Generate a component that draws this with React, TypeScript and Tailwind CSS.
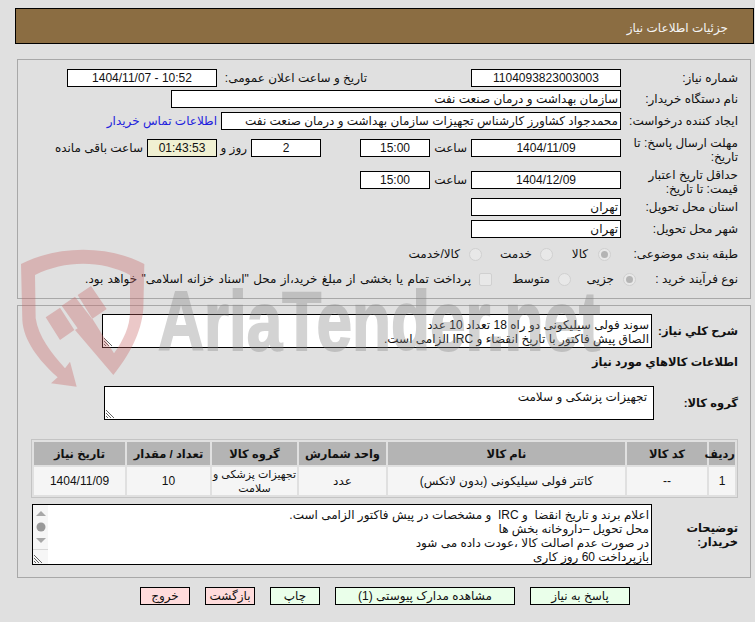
const Box = ({ className = "", bg = "bg-white", children }: { className?: string; bg?: string; children?: React.ReactNode }) => (
  <div className={`h-[18px] border border-black text-center leading-[16px] whitespace-nowrap overflow-hidden ${bg} ${className}`}>
    {children}
  </div>
);

const Grip = () => (
  <svg className="absolute left-[1px] bottom-[1px]" width="9" height="9" viewBox="0 0 9 9">
    <path d="M0 1 L8 9 M0 4 L5 9 M0 7 L2 9" stroke="#666" strokeWidth="1" fill="none" />
  </svg>
);

const Radio = ({ checked = false }: { checked?: boolean }) => (
  <span className="flex h-[13px] w-[13px] shrink-0 items-center justify-center rounded-full border border-[#d0d0d0] bg-[#e8e8e8]">
    {checked && <span className="h-[7px] w-[7px] rounded-full bg-[#b4b4b4]" />}
  </span>
);

const columns = [
  { title: "رديف", w: "w-[26px]" },
  { title: "كد كالا", w: "w-[80px]" },
  { title: "نام كالا", w: "w-[237px]" },
  { title: "واحد شمارش", w: "w-[87px]" },
  { title: "گروه كالا", w: "w-[85px]" },
  { title: "تعداد / مقدار", w: "w-[83px]" },
  { title: "تاريخ نياز", w: "w-[91px]" },
];

const cells = [
  "1",
  "--",
  "کاتتر فولی سیلیکونی (بدون لاتکس)",
  "عدد",
  <span className="text-[11px] whitespace-nowrap">
    تجهیزات پزشکی و
    <br />
    سلامت
  </span>,
  "10",
  "1404/11/09",
];

const buttons = [
  { label: "پاسخ به نیاز", className: "w-[100px] bg-[#eaffea]" },
  { label: "مشاهده مدارک پیوستی (1)", className: "w-[180px] bg-[#eaffea]" },
  { label: "چاپ", className: "w-[50px] bg-[#eaffea]" },
  { label: "بازگشت", className: "w-[50px] bg-[#ffdcdc]" },
  { label: "خروج", className: "w-[50px] bg-[#ffdcdc]" },
];

export default function App() {
  return (
    <div
      dir="rtl"
      className="relative h-[622px] overflow-hidden bg-[#e0e0e0] text-[12px] leading-[14px] text-[#111] font-['Liberation_Sans','DejaVu_Sans',sans-serif]"
    >
      <div className="mr-[1px] mt-[8px] h-[36px] w-[739px] border border-black bg-[#8b6d42] pr-[25px] leading-[38px] text-[#f4f4f4] [float:right]">
        جزئیات اطلاعات نیاز
      </div>
      <div className="clear-both h-[15px]" />

      <div className="mr-[4px] h-[240px] w-[734px] border border-[#a8a8a8] pr-[12px] pt-[9px]">
        <div className="flex items-center">
          <div className="w-[117px]">شماره نیاز:</div>
          <Box className="w-[150px]">1104093823003003</Box>
          <div className="mr-[104px] w-[145px] whitespace-nowrap">تاریخ و ساعت اعلان عمومی:</div>
          <Box className="mr-[5px] w-[150px]">
            <span dir="ltr">1404/11/07 - 10:52</span>
          </Box>
        </div>
        <div className="mt-[3px] flex items-center">
          <div className="w-[117px]">نام دستگاه خریدار:</div>
          <Box className="w-[450px] pr-[2px] text-right">سازمان بهداشت و درمان صنعت نفت</Box>
        </div>
        <div className="mt-[4px] flex items-center">
          <div className="w-[117px]">ایجاد کننده درخواست:</div>
          <Box className="w-[400px] pr-[2px] text-right">محمدجواد کشاورز کارشناس تجهیزات سازمان بهداشت و درمان صنعت نفت</Box>
          <div className="mr-[4px] whitespace-nowrap text-[#2222dd]">اطلاعات تماس خریدار</div>
        </div>
        <div className="mt-[9px] flex h-[26px] items-start">
          <div className="-mt-[3px] w-[117px] pl-[4px]">مهلت ارسال پاسخ: تا تاریخ:</div>
          <Box className="w-[150px]">1404/11/09</Box>
          <div className="w-[41px] pr-[4px] leading-[18px]">ساعت</div>
          <Box className="w-[70px]">15:00</Box>
          <Box className="mr-[39px] w-[70px]">2</Box>
          <div className="w-[34px] pr-[4px] leading-[18px] whitespace-nowrap">روز و</div>
          <Box className="w-[70px]" bg="bg-[#f0f0d2]">01:43:53</Box>
          <div className="mr-[4px] leading-[18px] whitespace-nowrap">ساعت باقی مانده</div>
        </div>
        <div className="mt-[6px] flex h-[27px] items-start">
          <div className="-mt-[3px] w-[117px] pl-[4px]">حداقل تاریخ اعتبار قیمت: تا تاریخ:</div>
          <Box className="w-[150px]">1404/12/09</Box>
          <div className="w-[41px] pr-[4px] leading-[18px]">ساعت</div>
          <Box className="w-[70px]">15:00</Box>
        </div>
        <div className="flex items-center">
          <div className="w-[117px]">استان محل تحویل:</div>
          <Box className="w-[150px] pr-[2px] text-right">تهران</Box>
        </div>
        <div className="mt-[4px] flex items-center">
          <div className="w-[117px]">شهر محل تحویل:</div>
          <Box className="w-[150px] pr-[2px] text-right">تهران</Box>
        </div>
        <div className="mt-[9px] flex h-[14px] items-center">
          <div className="w-[127px] whitespace-nowrap">طبقه بندی موضوعی:</div>
          <Radio checked />
          <span className="mr-[10px] w-[35px]">کالا</span>
          <Radio />
          <span className="mr-[8px] w-[50px]">خدمت</span>
          <Radio />
          <span className="mr-[9px]">کالا/خدمت</span>
        </div>
        <div className="mt-[11px] flex h-[14px] items-center">
          <div className="w-[102px] whitespace-nowrap">نوع فرآیند خرید :</div>
          <Radio checked />
          <span className="mr-[9px] w-[43px]">جزیی</span>
          <Radio />
          <span className="mr-[8px] w-[58px]">متوسط</span>
          <span className="h-[13px] w-[13px] shrink-0 rounded-[2px] border border-[#d0d0d0] bg-[#e8e8e8]" />
          <span className="mr-[8px] whitespace-nowrap [word-spacing:1px]">پرداخت تمام یا بخشی از مبلغ خرید،از محل "اسناد خزانه اسلامی" خواهد بود.</span>
        </div>
      </div>

      <div className="mr-[4px] mt-[6px] h-[273px] w-[734px] border border-[#a8a8a8] pr-[12px] pt-[8px]">
        <div className="flex items-center">
          <div className="w-[86px] text-[11.5px] font-bold whitespace-nowrap">شرح کلي نياز:</div>
          <div className="relative h-[34px] w-[550px] border border-black bg-white pr-[2px] pt-[3px]">
            سوند فولی سیلیکونی دو راه 18 تعداد 10 عدد
            <br />
            الصاق پیش فاکتور با تاریخ انقضاء و IRC الزامی است.
            <Grip />
          </div>
        </div>
        <div className="mt-[7px] text-[11.5px] font-bold">اطلاعات كالاهاي مورد نياز</div>
        <div className="mt-[17px] flex items-center">
          <div className="w-[84px] text-[11.5px] font-bold">گروه کالا:</div>
          <div className="relative h-[34px] w-[550px] border border-black bg-white pr-[6px] pt-[3px]">
            تجهیزات پزشکی و سلامت
            <Grip />
          </div>
        </div>
        <table className="mt-[19px] w-[707px] table-fixed border border-[#c4c4c4] [border-collapse:separate] [border-spacing:2px]">
          <thead>
            <tr>
              {columns.map((c) => (
                <th key={c.title} className={`${c.w} h-[23px] bg-[#b4b4b4] p-0 text-center text-[11.5px] font-bold whitespace-nowrap`}>
                  {c.title}
                </th>
              ))}
            </tr>
          </thead>
          <tbody>
            <tr>
              {cells.map((c, i) => (
                <td key={i} className="h-[28px] bg-[#f5f5f5] p-0 text-center">
                  {c}
                </td>
              ))}
            </tr>
          </tbody>
        </table>
        <div className="mt-[6px] flex items-center">
          <div className="w-[86px] text-[11.5px] font-bold">توضیحات خریدار:</div>
          <div className="relative h-[61px] w-[620px] overflow-hidden border border-black bg-white pr-[2px] pt-[3px]">
            <div>اعلام برند و تاریخ انقضا&nbsp; و IRC&nbsp; و مشخصات در پیش فاکتور الزامی است.</div>
            <div>محل تحویل –داروخانه بخش ها</div>
            <div>در صورت عدم اصالت کالا ،عودت داده می شود</div>
            <div>بازپرداخت 60 روز کاری</div>
            <div className="absolute bottom-0 left-0 top-0 w-[15px] bg-[#f6f6f6]">
              <svg className="absolute left-[3px] top-[6px]" width="10" height="32" viewBox="0 0 10 32">
                <path d="M5 0 L10 5 L0 5 Z" fill="#a8a8a8" />
                <circle cx="5" cy="16" r="4.5" fill="#999" />
                <path d="M0 27 L10 27 L5 32 Z" fill="#a8a8a8" />
              </svg>
              <div className="absolute bottom-0 left-0 h-[15px] w-[15px] border-t border-[#d8d8d8]" />
              <Grip />
            </div>
          </div>
        </div>
      </div>

      <div className="mt-[9px] flex gap-[15px] pr-[125px]">
        {buttons.map((b) => (
          <div key={b.label} className={`h-[18px] border border-black text-center leading-[16px] whitespace-nowrap ${b.className}`}>
            {b.label}
          </div>
        ))}
      </div>

      <div className="pointer-events-none absolute left-[15px] top-[240px] h-[150px] w-[640px] opacity-35">
        <svg className="absolute left-0 top-0" width="150" height="150" viewBox="0 0 450 450">
          <path
            fill="#c86464"
            d="M18 72 C130 15 280 15 388 72 L385 205 C380 280 340 350 295 405 L180 270 L232 236 L297 340 C325 300 345 260 345 215 L345 105 C260 60 150 60 60 105 L62 235 C70 290 110 340 150 385 L165 365 L185 440 L108 430 L128 412 C70 360 25 300 22 240 Z"
          />
          <path d="M92 232 L135 203 L178 270 L135 300 Z M140 197 L180 170 L232 238 L190 268 Z M188 165 L228 138 L275 207 L232 236 Z" fill="#c86464" />
        </svg>
        <span
          dir="ltr"
          className="absolute left-[143px] top-[31px] origin-left scale-x-[0.76] text-[84px] font-bold leading-[100px] whitespace-nowrap text-[#848484] [-webkit-text-stroke:2px_#848484] font-['Liberation_Sans',sans-serif]"
        >
          AriaTender.net
        </span>
      </div>
    </div>
  );
}
